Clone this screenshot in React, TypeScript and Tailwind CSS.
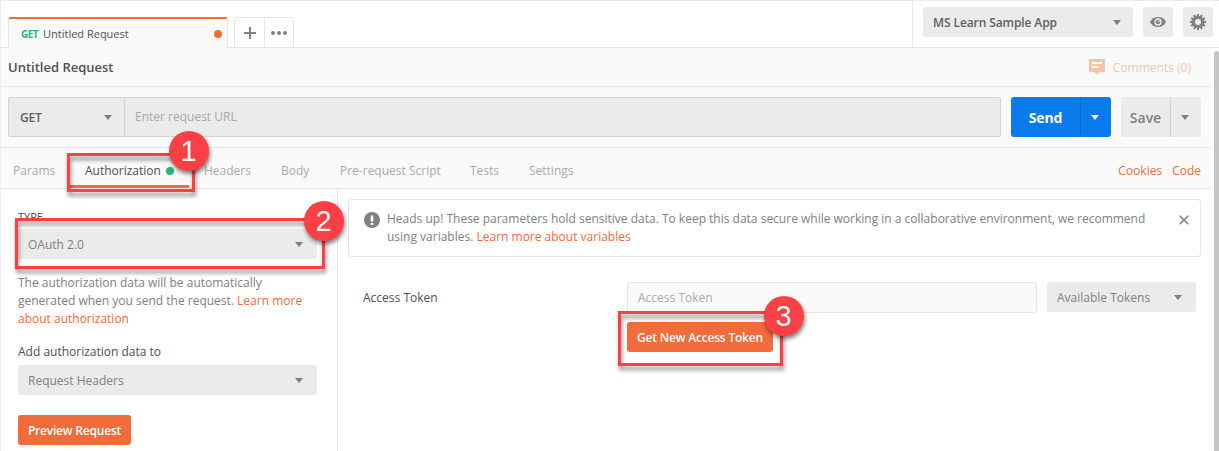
import React from "react";

const Caret = ({ className = "" }: { className?: string }) => (
  <svg width="8" height="5" viewBox="0 0 8 5" className={`shrink-0 ${className}`}>
    <path d="M0 0h8L4 5z" fill="currentColor" />
  </svg>
);

const Select = ({ label, className }: { label: string; className: string }) => (
  <div className={`flex h-[30px] items-center justify-between rounded-[3px] bg-[#ebebeb] pl-[10px] ${className}`}>
    <span className="pt-[2px]">{label}</span>
    <Caret className="text-[#808080]" />
  </div>
);

const Step = ({ n, className }: { n: number; className: string }) => (
  <div
    className={`absolute z-10 flex h-10 w-10 items-center justify-center rounded-full bg-[#fd4044] pr-px font-['Liberation_Sans',sans-serif] text-[29px] text-white drop-shadow-[1px_3px_2px_rgba(0,0,0,0.5)] ${className}`}
  >
    {n}
  </div>
);

const Frame = ({ className }: { className: string }) => (
  <div className={`absolute border-[3px] border-[#fd4044] drop-shadow-[1px_4px_2px_rgba(0,0,0,0.45)] ${className}`} />
);

const GearIcon = () => (
  <svg width="16" height="16" viewBox="0 0 16 16">
    <g fill="#808080">
      {[0, 30, 60, 90, 120, 150].map((a) => (
        <path key={a} d="M7.100 0h1.800l.4 3v10l-.4 3H7.100l-.4-3V3z" transform={`rotate(${a} 8 8)`} />
      ))}
      <circle cx="8" cy="8" r="6" />
    </g>
    <circle cx="8" cy="8" r="3" fill="#ebebeb" />
  </svg>
);

const EyeIcon = () => (
  <svg width="16" height="10" viewBox="0 0 16 10">
    <path d="M0 5C1.600 1.800 4.500 0 8 0s6.400 1.800 8 5c-1.600 3.200-4.500 5-8 5S1.600 8.200 0 5z" fill="#808080" />
    <circle cx="8" cy="5" r="3.700" fill="#ebebeb" />
    <circle cx="8" cy="5" r="2.300" fill="#808080" />
    <circle cx="8.800" cy="4.300" r="0.900" fill="#ebebeb" />
  </svg>
);

export default function App() {
  return (
    <div className="relative flex h-[451px] w-[1219px] flex-col overflow-hidden border-l border-[#efefef] bg-white font-['Open_Sans',sans-serif] text-[12px] leading-[18px] text-[#505050]">
      <header className="flex h-12 shrink-0 items-end border-t border-[#ececec] shadow-[inset_0_-1px_0_#e6e6e6]">
        <div className="ml-[7px] flex h-[31px] w-[220px] items-center rounded-t-[3px] border-x border-t-2 border-x-[#e6e6e6] border-t-[#f26b3a] bg-[#fafafa] pr-[5px] pl-3">
          <span className="w-[22px] text-[10px] font-bold tracking-[-0.5px] text-[#26b47f]">GET</span>
          <span className="pt-px text-[11px]">Untitled Request</span>
          <span className="ml-auto h-2 w-2 rounded-full bg-[#f47023]" />
        </div>
        <div className="ml-[6px] flex h-[31px] w-[60px] rounded-t-[3px] border border-[#e6e6e6]">
          <div className="flex w-[30px] items-center justify-center border-r border-[#e6e6e6]">
            <svg width="12" height="12" viewBox="0 0 12 12"><path d="M5 0h2v5h5v2H7v5H5V7H0V5h5z" fill="#808080" /></svg>
          </div>
          <div className="flex flex-1 items-center justify-center">
            <svg width="16" height="4" viewBox="0 0 16 4" fill="#808080"><circle cx="2" cy="2" r="2" /><circle cx="8" cy="2" r="2" /><circle cx="14" cy="2" r="2" /></svg>
          </div>
        </div>
        <div className="ml-auto flex h-[47px] w-[307px] gap-[10px] border-l border-[#e6e6e6] pt-[6px] pl-[10px]">
          <Select label="MS Learn Sample App" className="w-[210px] pr-3 font-semibold tracking-[-0.1px] text-[#606060]" />
          <div className="flex h-[30px] w-[30px] items-center justify-center rounded-[3px] bg-[#ebebeb]"><EyeIcon /></div>
          <div className="flex h-[30px] w-[30px] items-center justify-center rounded-[3px] bg-[#ebebeb]"><GearIcon /></div>
        </div>
      </header>

      <div className="flex min-h-0 flex-1">
        <main className="flex w-[1210px] flex-col">
          <div className="flex h-[39px] shrink-0 items-center justify-between border-b border-[#e6e6e6] bg-[#fafafa] pr-[20px] pl-[7px]">
            <h1 className="text-[13px] font-semibold">Untitled Request</h1>
            <div className="flex items-center gap-2 text-[#f9c2ac]">
              <svg width="16" height="16" viewBox="0 0 16 16"><path d="M0 0h16v13h-5l-3 3-3-3H0z" fill="currentColor" /><path d="M3 4h10M3 8h7" stroke="#fff" strokeWidth="2" /></svg>
              <span className="pt-[2px]">Comments (0)</span>
            </div>
          </div>

          <div className="flex h-[61px] shrink-0 items-center border-b border-[#e6e6e6] bg-[#fafafa] pl-[7px]">
            <div className="flex h-10 w-[993px] rounded-[2px] border border-[#d4d4d4] bg-[#ebebeb]">
              <div className="flex w-[116px] items-center justify-between border-r border-[#d4d4d4] pr-3 pl-[11px] font-semibold">
                <span className="pt-px tracking-[-0.2px] text-[#606060]">GET</span>
                <Caret className="text-[#808080]" />
              </div>
              <span className="pt-[10px] pl-[10px] text-[#a9a9a9]">Enter request URL</span>
            </div>
            <div className="ml-[10px] flex h-10 w-[100px] rounded-[3px] bg-[#097bed] text-[14px] font-bold text-white">
              <div className="flex w-[70px] items-center justify-center border-r border-[#086ad0] pt-px tracking-[-0.1px]">Send</div>
              <div className="flex flex-1 items-center justify-center pr-[2px]"><Caret /></div>
            </div>
            <div className="ml-[10px] flex h-10 w-20 rounded-[3px] bg-[#ebebeb] text-[14px] font-semibold text-[#808080]">
              <div className="flex w-[50px] items-center justify-center border-r border-[#d4d4d4] pt-px">Save</div>
              <div className="flex flex-1 items-center justify-center pr-[2px]"><Caret /></div>
            </div>
          </div>

          <nav className="flex h-[41px] shrink-0 items-end border-b border-[#e6e6e6] bg-[#fafafa] pl-3 text-[#a9a9a9] [&>*]:pb-[8px]">
            <span className="w-[55px]">Params</span>
            <span className="mr-[15px] flex h-10 w-[121px] items-end gap-[5px] border-b-[3px] border-[#f26b3a] pb-[5px]! pl-[17px] text-[#505050]">
              Authorization<i className="mb-[5px] h-2 w-2 rounded-full bg-[#26b47f]" />
            </span>
            <span className="w-[77px]">Headers</span>
            <span className="w-[59px]">Body</span>
            <span className="w-[130px]">Pre-request Script</span>
            <span className="w-[59px]">Tests</span>
            <span>Settings</span>
            <span className="ml-auto text-[#f26b3a]">Cookies</span>
            <span className="mr-[10px] ml-[10px] text-[#f26b3a]">Code</span>
          </nav>

          <div className="flex min-h-0 flex-1">
            <aside className="flex w-[337px] shrink-0 flex-col items-start border-r border-[#e6e6e6] pt-[19px] pl-[17px]">
              <span className="text-[11px]">TYPE</span>
              <Select label="OAuth 2.0" className="mt-[3px] w-[299px] pr-[14px] text-[#808080]" />
              <p className="mt-[15px] w-[299px] text-[#808080]">
                The authorization data will be automatically generated when you send the request. <span className="text-[#f26b3a]">Learn more about authorization</span>
              </p>
              <span className="mt-[15px]">Add authorization data to</span>
              <Select label="Request Headers" className="mt-1 w-[299px] pr-[14px] text-[#808080]" />
              <button className="mt-5 h-[30px] w-[113px] rounded-[3px] bg-[#f26b3a] pt-[2px] font-semibold tracking-[-0.2px] whitespace-nowrap text-white">Preview Request</button>
            </aside>
            <section className="flex flex-1 flex-col pt-[10px] pl-[10px]">
              <div className="flex h-[58px] w-[853px] items-start rounded-[3px] border border-[#e6e6e6] pt-[10px] pl-[15px]">
                <svg width="16" height="16" viewBox="0 0 16 16" className="mt-[2px]"><circle cx="8" cy="8" r="8" fill="#808080" /><path d="M6.700 3.500h2.600v6H6.700zM6.700 11h2.600v2H6.700z" fill="#fff" /></svg>
                <p className="ml-[7px] w-[770px] text-[#808080]">
                  Heads up! These parameters hold sensitive data. To keep this data secure while working in a collaborative environment, we recommend<br />using variables. <span className="text-[#f26b3a]">Learn more about variables</span>
                </p>
                <svg width="10" height="10" viewBox="0 0 10 10" className="mt-[5px] ml-[22px]"><path d="M.700.700l8.600 8.600M9.300.700L.700 9.300" stroke="#808080" strokeWidth="1.600" /></svg>
              </div>
              <div className="mt-[25px] flex pl-[15px]">
                <span className="w-[264px] pt-[7px]">Access Token</span>
                <div className="flex flex-col items-start">
                  <div className="flex h-[31px] w-[410px] items-center rounded-[3px] border border-[#e6e6e6] bg-[#fafafa] pt-px pl-[10px] text-[#a9a9a9]">Access Token</div>
                  <button className="mt-[9px] h-[30px] w-[146px] rounded-[3px] bg-[#f26b3a] pt-[2px] font-semibold tracking-[-0.2px] whitespace-nowrap text-white">Get New Access Token</button>
                </div>
                <Select label="Available Tokens" className="ml-[10px] w-[149px] pr-[14px] text-[#808080]" />
              </div>
            </section>
          </div>
        </main>
        <div className="mt-[3px] ml-[3px] w-[5px] rounded-t-[3px] bg-[#c5c5c5]" />
      </div>

      <Frame className="top-[153px] left-[66px] h-[39px] w-[128px]" />
      <Frame className="top-[218px] left-[14px] h-[51px] w-[310px]" />
      <Frame className="top-[311px] left-[617px] h-[55px] w-[165px]" />
      <Step n={1} className="top-[131px] left-[168px]" />
      <Step n={2} className="top-[201px] left-[303px]" />
      <Step n={3} className="top-[296px] left-[763px]" />
    </div>
  );
}
